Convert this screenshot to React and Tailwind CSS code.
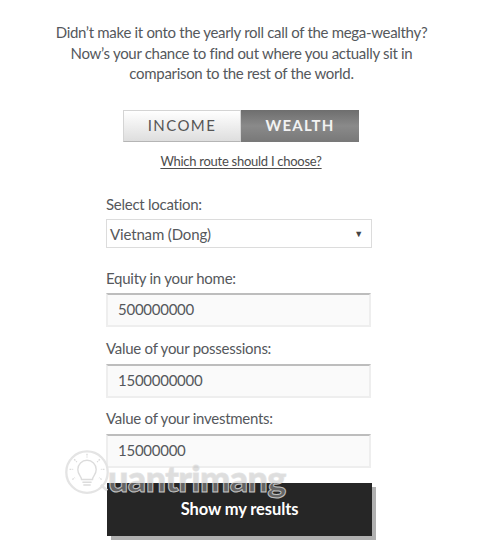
const fields = [
  { label: "Equity in your home:", value: "500000000", gap: "mt-[20px]" },
  { label: "Value of your possessions:", value: "1500000000", gap: "mt-[11px]" },
  { label: "Value of your investments:", value: "15000000", gap: "mt-[10px]" },
];

function Watermark() {
  return (
    <div className="pointer-events-none absolute left-[64px] top-[449px] z-10 flex h-[50px] items-start">
      <svg width="46" height="50" viewBox="0 0 50 54" fill="none" className="shrink-0">
        <circle cx="25" cy="25" r="22.5" fill="#ffffff" fillOpacity="0.7" stroke="#e4e4e4" strokeWidth="2.5" />
        <path d="M40 39l7 6" stroke="#e4e4e4" strokeWidth="3" />
        <path d="M19 33c0-4-4-5-4-11a10 10 0 0 1 20 0c0 6-4 7-4 11z" stroke="#dcdcdc" strokeWidth="1.5" />
        <path d="M20 36h10M21 39h8" stroke="#dcdcdc" strokeWidth="1.5" />
        <path d="M25 5v4M11 11l3 3M39 11l-3 3M6 22h4M44 22h-4M9 33l3-2M41 33l-3-2" stroke="#dcdcdc" strokeWidth="1.5" strokeDasharray="2 1" />
      </svg>
      <span className="ml-[-2px] mt-[9px] font-['Lato',sans-serif] text-[36px] font-black leading-[40px] tracking-[-0.6px] text-[#b4b4b4]/45 [-webkit-text-stroke:1px_rgba(225,225,225,0.8)]">
        uantrimang
      </span>
    </div>
  );
}

export default function App() {
  return (
    <div className="relative h-[550px] w-[500px] overflow-hidden bg-white font-['Lato',sans-serif] text-[#4a4a4a]">
      <p className="w-[482px] pl-[1px] pt-[22px] text-center text-[15px] leading-[20.5px] tracking-[-0.31px] text-[#55585c]">
        Didn’t make it onto the yearly roll call of the mega-wealthy?
        <br />
        Now’s your chance to find out where you actually sit in
        <br />
        comparison to the rest of the world.
      </p>

      <div className="ml-[123px] mt-[26px] flex h-[32px] w-[236px] text-[15px] tracking-[1.4px]">
        <div className="flex w-[118px] items-center justify-center border border-[#d4d4d4] border-b-[#b5b5b5] bg-gradient-to-b from-white to-[#dedede] text-[#555555]">
          INCOME
        </div>
        <div className="flex w-[118px] items-center justify-center bg-gradient-to-b from-[#6e6e6e] via-[#8a8a8a] to-[#787878] font-bold tracking-[1.2px] text-[#f2f2f2]">
          WEALTH
        </div>
      </div>

      <div className="mt-[10px] w-[482px] text-center text-[13px] leading-[18px] tracking-[-0.27px] text-[#4c4c4c] underline underline-offset-2">
        Which route should I choose?
      </div>

      <form className="ml-[106px] mt-[24px] w-[266px] text-[15px] tracking-[-0.26px] text-[#55585c]">
        <div className="leading-[20px]">Select location:</div>
        <div className="mt-[5px] flex h-[29px] w-[266px] items-center justify-between border border-[#dcdcdc] bg-white pl-[3px] pr-[8px] pt-[2px] tracking-[-0.15px] text-[#55585c]">
          <span>Vietnam (Dong)</span>
          <span className="text-[9px] text-[#444444]">▼</span>
        </div>
        {fields.map((field, index) => (
          <div key={field.label} className={field.gap}>
            <div className="leading-[20px]">{field.label}</div>
            <div className={`flex h-[34px] w-[265px] items-center border-2 border-[#eeeeee] border-t-[#bdbdbd] bg-[#fafafa] pl-[10px] text-[#55585c] ${index === 0 ? "mt-[5px]" : "mt-[6px]"}`}>
              {field.value}
            </div>
          </div>
        ))}
        <button
          type="button"
          className="ml-[1px] mt-[15px] h-[53px] w-[265px] bg-[#262626] text-[16.5px] font-bold tracking-[-0.1px] text-white shadow-[4px_4px_0_#b0b0b0]"
        >
          Show my results
        </button>
      </form>

      <Watermark />
    </div>
  );
}
